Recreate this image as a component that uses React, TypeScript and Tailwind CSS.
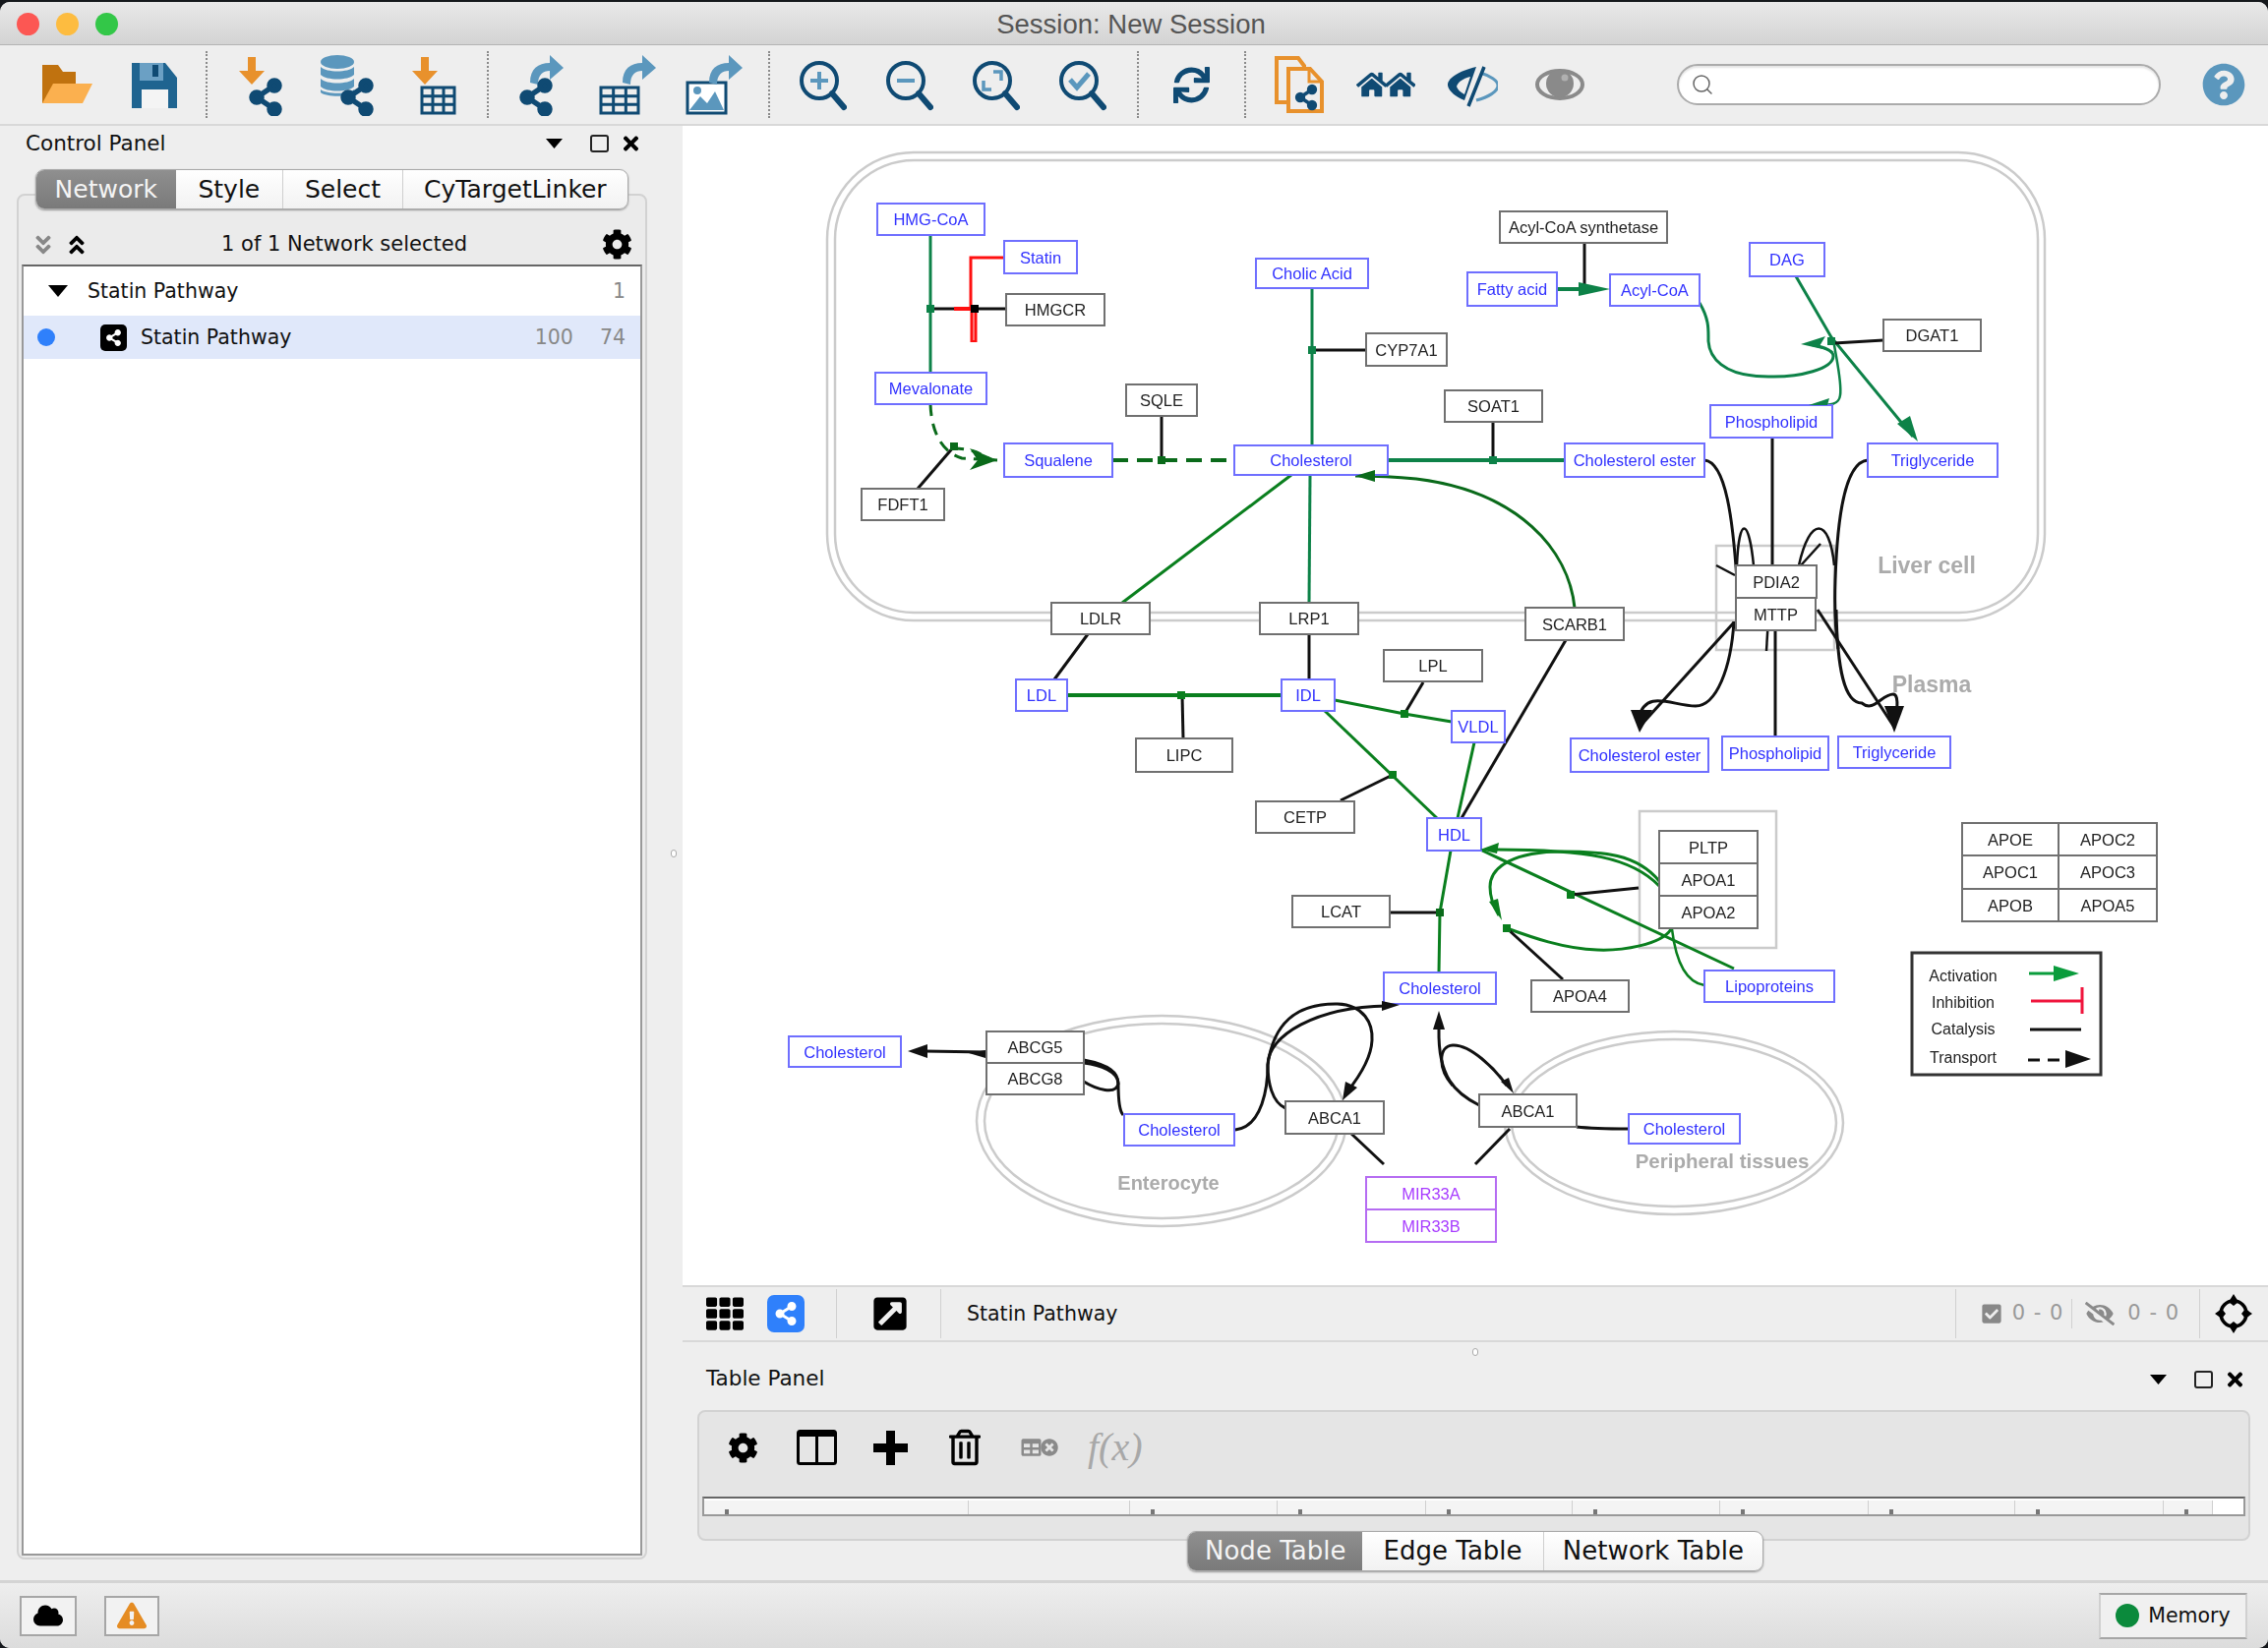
import {
  FaCheckSquare,
  FaCloud,
  FaCog,
  FaAngleDoubleDown,
  FaAngleDoubleUp,
  FaExclamationTriangle,
  FaExternalLinkSquareAlt,
  FaEyeSlash,
  FaHome,
  FaQuestionCircle,
  FaRegTrashAlt,
  FaShareAlt,
  FaSync,
  FaTable,
  FaTh,
  FaTimes,
  FaTimesCircle,
} from "react-icons/fa";
import { Search } from "lucide-react";

const NAVY = "#0f4a73";
const SKY = "#5b97bd";
const ORANGE = "#e8912c";
const TEAL = "#0d8248";
const GREEN = "#0a7f1e";
const DARK = "#0a6a1a";
const INK = "#111111";

const Share = ({ cx, cy, s = 11, fill = NAVY }: { cx: number; cy: number; s?: number; fill?: string }) => (
  <g fill={fill} stroke={fill} strokeWidth={s * 0.45}>
    <line x1={cx + s * 0.75} y1={cy - s} x2={cx - s * 0.75} y2={cy} />
    <line x1={cx + s * 0.75} y1={cy + s} x2={cx - s * 0.75} y2={cy} />
    <circle cx={cx + s * 0.75} cy={cy - s} r={s * 0.42} />
    <circle cx={cx - s * 0.75} cy={cy} r={s * 0.42} />
    <circle cx={cx + s * 0.75} cy={cy + s} r={s * 0.42} />
  </g>
);

const Grid = ({ x, y, w, h }: { x: number; y: number; w: number; h: number }) => (
  <g stroke={NAVY} strokeWidth="3" fill="none">
    <rect x={x} y={y} width={w} height={h} />
    <line x1={x} y1={y + h / 3} x2={x + w} y2={y + h / 3} />
    <line x1={x} y1={y + (2 * h) / 3} x2={x + w} y2={y + (2 * h) / 3} />
    <line x1={x + w / 3} y1={y} x2={x + w / 3} y2={y + h} />
    <line x1={x + (2 * w) / 3} y1={y} x2={x + (2 * w) / 3} y2={y + h} />
  </g>
);

const DownArrow = ({ x }: { x: number }) => (
  <path d={`M${x - 4} 4h8v14h9L${x} 32 ${x - 13} 18h9z`} fill={ORANGE} />
);

const OutArrow = ({ x }: { x: number }) => (
  <path
    d={`M${x} 30C${x} 16 ${x + 8} 10 ${x + 20} 10V2L${x + 34} 15 ${x + 20} 27V18C${x + 13} 18 ${x + 8} 22 ${x + 8} 32z`}
    fill={SKY}
  />
);

const Sep = ({ ml }: { ml: string }) => <div className={`${ml} h-[68px] w-0 border-l-2 border-dotted border-[#8a8a8a]`} />;

const ZoomIcon = ({ children, ml }: { children: React.ReactNode; ml: string }) => (
  <svg className={`${ml} h-[64px] w-[48px]`} viewBox="0 0 48 64">
    <circle cx="20" cy="28" r="18" fill="none" stroke={NAVY} strokeWidth="4" />
    <line x1="33" y1="41" x2="45" y2="55" stroke={NAVY} strokeWidth="6" strokeLinecap="round" />
    {children}
  </svg>
);

const Toolbar = () => (
  <div className="flex h-[82px] items-center border-b-2 border-[#d8d8d8] bg-[#eeeeee] pl-[42px]">
    <svg className="h-[64px] w-[52px]" viewBox="0 0 52 64">
      <path d="M1 12h16l5 7h13v12H14L6 51H1z" fill="#c0720f" />
      <path d="M12 31h40L42 51H1z" fill="#fbb04f" />
    </svg>
    <svg className="ml-[40px] h-[64px] w-[46px]" viewBox="0 0 46 64">
      <path d="M0 10h34l12 15v31H0z" fill="#1f6490" />
      <rect x="8" y="10" width="24" height="18" fill="#6ba0c4" />
      <rect x="21" y="12" width="6" height="12" fill={NAVY} />
      <rect x="10" y="37" width="27" height="19" fill="#f4f4f4" />
    </svg>
    <Sep ml="ml-[29px]" />
    <svg className="ml-[32px] h-[64px] w-[45px]" viewBox="0 0 45 64">
      <DownArrow x={13} />
      <Share cx={27} cy={45} s={12} />
    </svg>
    <svg className="ml-[37px] h-[64px] w-[56px]" viewBox="0 0 56 64">
      <g fill={SKY}>
        <ellipse cx="18" cy="9" rx="17" ry="7" />
        <path d="M1 14c6 6 28 6 34 0v8c-6 6-28 6-34 0z" />
        <path d="M1 26c6 6 28 6 34 0v8c-6 6-28 6-34 0z" />
        <path d="M1 37c6 5 28 5 34 0v3c-6 5-28 5-34 0z" />
      </g>
      <Share cx={38} cy={45} s={12} />
    </svg>
    <svg className="ml-[38px] h-[64px] w-[46px]" viewBox="0 0 46 64">
      <DownArrow x={13} />
      <Grid x={10} y={35} w={33} h={26} />
    </svg>
    <Sep ml="ml-[30px]" />
    <svg className="ml-[30px] h-[64px] w-[48px]" viewBox="0 0 48 64">
      <OutArrow x={12} />
      <Share cx={18} cy={45} s={12} />
    </svg>
    <svg className="ml-[34px] h-[64px] w-[60px]" viewBox="0 0 60 64">
      <Grid x={2} y={35} w={38} h={26} />
      <OutArrow x={24} />
    </svg>
    <svg className="ml-[28px] h-[64px] w-[62px]" viewBox="0 0 62 64">
      <rect x="2" y="30" width="39" height="31" fill="#fff" stroke={NAVY} strokeWidth="3" />
      <path d="M4 58l11-14 7 7 8-12 9 19z" fill={SKY} />
      <circle cx="12" cy="38" r="4" fill={SKY} />
      <OutArrow x={24} />
    </svg>
    <Sep ml="ml-[22px]" />
    <ZoomIcon ml="ml-[30px]">
      <path d="M20 19v18M11 28h18" stroke={SKY} strokeWidth="4" />
    </ZoomIcon>
    <ZoomIcon ml="ml-[40px]">
      <path d="M11 28h18" stroke={SKY} strokeWidth="4" />
    </ZoomIcon>
    <ZoomIcon ml="ml-[40px]">
      <path d="M21 19h8v9M19 37h-8v-9" stroke={SKY} strokeWidth="3.5" fill="none" />
    </ZoomIcon>
    <ZoomIcon ml="ml-[40px]">
      <path d="M11 27l7 8 12-14" stroke={SKY} strokeWidth="5" fill="none" />
    </ZoomIcon>
    <Sep ml="ml-[31px]" />
    <FaSync className="ml-[35px] h-[37px] w-[37px] text-[#0f4a73]" />
    <Sep ml="ml-[35px]" />
    <svg className="ml-[29px] h-[64px] w-[50px]" viewBox="0 0 50 64">
      <path d="M2 5h22l6 8v37H2z" fill="none" stroke={ORANGE} strokeWidth="4" />
      <path d="M14 16h22l12 13v30H14z" fill="#eeeeee" stroke={ORANGE} strokeWidth="4" />
      <path d="M35 16v13h13" fill="none" stroke={ORANGE} strokeWidth="3" />
      <Share cx={32} cy={45} s={8} />
    </svg>
    <div className="ml-[33px] flex w-[60px] justify-between">
      <FaHome className="-mr-[3px] h-[32px] w-[33px] text-[#0f4a73]" />
      <FaHome className="h-[32px] w-[33px] text-[#0f4a73]" />
    </div>
    <svg className="ml-[32px] h-[64px] w-[52px]" viewBox="0 0 52 64">
      <path d="M30 14C12 18 0 26 1 33c1 6 9 12 17 15z" fill={NAVY} />
      <path d="M24 24c-8 2-13 6-14 10 1 3 4 6 8 8z" fill="#eeeeee" />
      <path d="M34 20c10 3 18 8 18 13 0 6-10 12-22 15" fill="none" stroke={SKY} strokeWidth="3" />
      <path d="M37 12L21 52" stroke="#eeeeee" strokeWidth="5" />
      <path d="M38 14L22 54" stroke={NAVY} strokeWidth="3.5" />
    </svg>
    <svg className="ml-[37px] h-[64px] w-[52px]" viewBox="0 0 52 64">
      <ellipse cx="26" cy="32" rx="23" ry="14" fill="none" stroke="#8a8a8a" strokeWidth="4" />
      <circle cx="26" cy="31" r="14" fill="#8a8a8a" />
      <circle cx="31" cy="25" r="3.5" fill="#b0b0b0" />
    </svg>
    <div className="ml-[93px] flex h-[42px] w-[492px] items-center rounded-[21px] border-2 border-[#ababab] bg-white pl-[12px] shadow-[inset_0_2px_2px_#e4e4e4]">
      <Search className="h-[24px] w-[24px] text-[#666666]" strokeWidth={1.5} />
    </div>
    <FaQuestionCircle className="ml-[42px] h-[44px] w-[44px] text-[#5b97bd]" />
  </div>
);

const Tabs = ({ items, className }: { items: { label: string; w: string }[]; className: string }) => (
  <div className={`relative z-10 flex h-[41px] overflow-hidden rounded-[9px] border border-[#a9a9a9] bg-gradient-to-b from-white to-[#f2f2f2] text-[#111] shadow-[0_1px_2px_#999] ${className}`}>
    {items.map((t, i) => (
      <div
        key={t.label}
        className={`${t.w} flex items-center justify-center ${
          i === 0
            ? "bg-gradient-to-b from-[#8f8f8f] to-[#7a7a7a] text-[#f4f4f4]"
            : i === 1
              ? ""
              : "border-l border-[#cfcfcf]"
        }`}
      >
        {t.label}
      </div>
    ))}
  </div>
);

const PanelButtons = () => (
  <div className="flex items-center">
    <svg className="h-[10px] w-[17px]" viewBox="0 0 17 10">
      <path d="M0 0h17L8.5 10z" fill="#000" />
    </svg>
    <div className="ml-[28px] h-[18px] w-[19px] rounded-[3px] border-2 border-[#222]" />
    <FaTimes className="ml-[13px] h-[22px] w-[19px] text-black" />
  </div>
);

const LeftPanel = () => (
  <div className="flex w-[676px] flex-col">
    <div className="flex h-[36px] items-center justify-between pl-[26px] pr-[25px] text-[21.5px] text-[#111]">
      <span>Control Panel</span>
      <PanelButtons />
    </div>
    <Tabs
      className="ml-[36px] mt-[8px] w-[603px] text-[25px]"
      items={[
        { label: "Network", w: "w-[142px]" },
        { label: "Style", w: "w-[109px]" },
        { label: "Select", w: "w-[122px]" },
        { label: "CyTargetLinker", w: "w-[230px]" },
      ]}
    />
    <div className="-mt-[16px] ml-[17px] flex h-[1389px] w-[641px] flex-col rounded-[8px] border-2 border-[#d2d2d2] bg-[#ebebeb] px-[3px] pb-[2px]">
      <div className="flex h-[70px] items-end pb-[5px] pl-[12px] pr-[10px] text-[21px] text-[#111]">
        <div className="flex h-[30px] w-[66px] items-center gap-[14px]">
          <FaAngleDoubleDown className="h-[24px] w-[20px] text-[#888]" />
          <FaAngleDoubleUp className="h-[24px] w-[20px] text-black" />
        </div>
        <div className="flex h-[30px] flex-1 items-center justify-center pr-[12px]">1 of 1 Network selected</div>
        <FaCog className="h-[31px] w-[31px] text-black" />
      </div>
      <div className="flex-1 border-2 border-[#999] border-t-[#666] bg-white text-[20.5px] text-[#111]">
        <div className="flex h-[50px] items-center pl-[25px] pr-[15px]">
          <svg className="h-[12px] w-[20px]" viewBox="0 0 20 12">
            <path d="M0 0h20L10 12z" fill="#000" />
          </svg>
          <span className="ml-[20px] flex-1">Statin Pathway</span>
          <span className="text-[#888]">1</span>
        </div>
        <div className="flex h-[44px] items-center bg-[#e0e8fa] pl-[14px] pr-[15px]">
          <div className="h-[18px] w-[18px] rounded-full bg-[#2f80fb]" />
          <div className="ml-[46px] flex h-[27px] w-[27px] items-center justify-center rounded-[5px] bg-black">
            <FaShareAlt className="h-[17px] w-[17px] text-white" />
          </div>
          <span className="ml-[14px] flex-1">Statin Pathway</span>
          <span className="text-[#888]">100</span>
          <span className="ml-[27px] text-[#888]">74</span>
        </div>
      </div>
    </div>
  </div>
);

type Kind = "b" | "k" | "p";
const nodes: [string, number, number, number, number, Kind][] = [
  ["HMG-CoA", 892, 207, 1001, 239, "b"],
  ["Statin", 1021, 245, 1095, 278, "b"],
  ["HMGCR", 1023, 299, 1123, 331, "k"],
  ["Mevalonate", 890, 379, 1003, 411, "b"],
  ["SQLE", 1145, 391, 1217, 423, "k"],
  ["Squalene", 1021, 451, 1131, 485, "b"],
  ["Cholesterol", 1255, 453, 1411, 483, "b"],
  ["FDFT1", 876, 497, 960, 529, "k"],
  ["Cholic Acid", 1277, 263, 1391, 293, "b"],
  ["CYP7A1", 1389, 339, 1471, 372, "k"],
  ["LDLR", 1069, 613, 1169, 645, "k"],
  ["LRP1", 1281, 613, 1381, 645, "k"],
  ["SOAT1", 1469, 397, 1568, 429, "k"],
  ["Acyl-CoA synthetase", 1525, 215, 1695, 247, "k"],
  ["Fatty acid", 1492, 277, 1583, 311, "b"],
  ["Acyl-CoA", 1637, 279, 1728, 311, "b"],
  ["DAG", 1779, 247, 1855, 281, "b"],
  ["DGAT1", 1915, 325, 2014, 357, "k"],
  ["Phospholipid", 1739, 412, 1863, 445, "b"],
  ["Cholesterol ester", 1591, 451, 1733, 485, "b"],
  ["Triglyceride", 1899, 451, 2031, 485, "b"],
  ["PDIA2", 1765, 575, 1847, 608, "k"],
  ["MTTP", 1765, 608, 1846, 641, "k"],
  ["SCARB1", 1551, 618, 1651, 651, "k"],
  ["LDL", 1033, 691, 1085, 723, "b"],
  ["IDL", 1303, 691, 1357, 723, "b"],
  ["LPL", 1407, 661, 1507, 693, "k"],
  ["LIPC", 1155, 751, 1253, 785, "k"],
  ["CETP", 1277, 815, 1377, 847, "k"],
  ["HDL", 1451, 832, 1506, 865, "b"],
  ["LCAT", 1314, 911, 1413, 943, "k"],
  ["Cholesterol", 1407, 989, 1521, 1021, "b"],
  ["Cholesterol", 802, 1054, 916, 1085, "b"],
  ["ABCG5", 1003, 1049, 1102, 1081, "k"],
  ["ABCG8", 1003, 1081, 1102, 1113, "k"],
  ["Cholesterol", 1143, 1133, 1255, 1165, "b"],
  ["ABCA1", 1307, 1120, 1407, 1153, "k"],
  ["MIR33A", 1389, 1197, 1521, 1230, "p"],
  ["MIR33B", 1389, 1230, 1521, 1263, "p"],
  ["VLDL", 1476, 723, 1530, 755, "b"],
  ["Cholesterol ester", 1597, 751, 1737, 785, "b"],
  ["Phospholipid", 1751, 749, 1859, 783, "b"],
  ["Triglyceride", 1869, 749, 1983, 781, "b"],
  ["PLTP", 1687, 845, 1787, 878, "k"],
  ["APOA1", 1687, 878, 1787, 911, "k"],
  ["APOA2", 1687, 911, 1787, 944, "k"],
  ["APOA4", 1557, 997, 1656, 1029, "k"],
  ["Lipoproteins", 1733, 987, 1865, 1019, "b"],
  ["ABCA1", 1504, 1113, 1603, 1146, "k"],
  ["Cholesterol", 1656, 1133, 1769, 1163, "b"],
  ["APOE", 1995, 837, 2093, 870, "k"],
  ["APOC2", 2093, 837, 2193, 870, "k"],
  ["APOC1", 1995, 870, 2093, 904, "k"],
  ["APOC3", 2093, 870, 2193, 904, "k"],
  ["APOB", 1995, 904, 2093, 937, "k"],
  ["APOA5", 2093, 904, 2193, 937, "k"],
];

const kinds: Record<Kind, { stroke: string; text: string }> = {
  b: { stroke: "#6f6fff", text: "#3232ff" },
  k: { stroke: "#707070", text: "#222222" },
  p: { stroke: "#b56cf2", text: "#a83cff" },
};

// [path, colour, width, dash]
const edges: [string, string, number, string?][] = [
  ["M946 239V379", TEAL, 3],
  ["M946 314H1023", INK, 3],
  ["M970 314H990", "#ff1010", 4],
  ["M1021 262H987V314", "#ff1010", 3],
  ["M990 312V348", "#ff1010", 7],
  ["M990 314V346", "#ff9090", 1.5],
  ["M946 411C947 440 958 460 978 466L1014 468", DARK, 3, "12 8"],
  ["M970 456C985 456 995 460 1005 466", DARK, 3, "10 8"],
  ["M933 497L970 454", INK, 3],
  ["M1131 468H1255", DARK, 4, "16 9"],
  ["M1181 423V468", INK, 3],
  ["M1334 293V453", TEAL, 3],
  ["M1334 356H1389", INK, 3],
  ["M1411 468H1591", TEAL, 4],
  ["M1518 429V468", INK, 3],
  ["M1313 483L1141 613", GREEN, 3],
  ["M1332 483L1331 613", TEAL, 3],
  ["M1601 618C1595 560 1545 500 1440 487C1410 484 1390 484 1378 484", DARK, 3],
  ["M1611 247V294", INK, 3],
  ["M1583 294H1625", TEAL, 4],
  ["M1728 308C1738 325 1737 335 1737 347C1738 362 1750 383 1798 383C1830 384 1864 375 1864 362C1864 355 1850 352 1840 350", TEAL, 3],
  ["M1826 281L1862 343L1945 444", TEAL, 3],
  ["M1915 346L1865 349", INK, 3],
  ["M1864 345C1868 370 1873 390 1871 402C1870 412 1860 412 1848 412", TEAL, 2.5],
  ["M1802 445V575", INK, 3],
  ["M1733 468C1755 470 1762 530 1766 590", INK, 3],
  ["M1899 468C1875 470 1868 530 1866 590C1865 620 1866 640 1869 660", INK, 3],
  ["M1766 575C1768 525 1778 525 1783 575", INK, 2.5],
  ["M1829 575C1840 525 1860 525 1865 575", INK, 2.5],
  ["M1831 575L1851 553", INK, 2.5],
  ["M1745 575L1764 585", INK, 2.5],
  ["M1763 633L1668 738", INK, 3],
  ["M1763 632C1760 680 1745 718 1724 718C1700 718 1674 700 1666 730", INK, 3],
  ["M1805 641V749", INK, 3],
  ["M1798 628L1796 662", INK, 2.5],
  ["M1848 620L1925 738", INK, 3],
  ["M1867 620C1868 680 1875 715 1893 715C1905 725 1913 706 1925 706C1932 706 1928 730 1926 740", INK, 3],
  ["M1592 651L1486 832", INK, 3],
  ["M1499 755L1482 832", GREEN, 3],
  ["M1357 712L1428 726L1476 734", GREEN, 3],
  ["M1428 726L1447 694", INK, 3],
  ["M1347 723L1461 832", GREEN, 3],
  ["M1363 814L1416 788", INK, 3],
  ["M1085 707H1303", GREEN, 4],
  ["M1202 707L1203 751", INK, 3],
  ["M1106 645L1072 691", INK, 3],
  ["M1331 645V691", INK, 3],
  ["M1475 865L1464 928L1463 989", GREEN, 3],
  ["M1413 928H1464", INK, 3],
  ["M1763 985L1505 864", GREEN, 3],
  ["M1597 910L1666 903", INK, 3],
  ["M1687 901C1659 872 1614 864 1520 864", GREEN, 3],
  ["M1687 896C1664 868 1629 866 1589 866C1540 866 1515 881 1515 902C1515 915 1519 923 1524 931", GREEN, 3],
  ["M1699 945C1689 961 1649 967 1624 966C1589 965 1554 952 1532 944", GREEN, 3],
  ["M1589 996L1532 944", INK, 3],
  ["M1733 1002C1714 999 1704 978 1700 945", GREEN, 2.5],
  ["M1256 1149C1284 1146 1289 1104 1289 1083C1289 1053 1338 1024 1410 1023", INK, 3],
  ["M1307 1127C1293 1121 1289 1100 1289 1083C1293 1053 1307 1020 1360 1021C1387 1022 1396 1041 1395 1058C1394 1079 1378 1100 1370 1110", INK, 3],
  ["M1374 1153L1407 1184", INK, 3],
  ["M1002 1070L940 1069", INK, 3],
  ["M1102 1078C1128 1083 1137 1091 1137 1102C1137 1121 1139 1131 1142 1134", INK, 3],
  ["M1102 1100C1115 1108 1135 1114 1137 1102C1137 1090 1119 1083 1102 1081", INK, 3],
  ["M1504 1124C1480 1112 1462 1096 1463 1047", INK, 3],
  ["M1532 1104C1520 1087 1495 1062 1477 1063C1462 1064 1462 1087 1477 1104", INK, 3],
  ["M1603 1146C1620 1148 1640 1148 1656 1148", INK, 3],
  ["M1535 1148L1500 1184", INK, 3],
];

const arrows: [string, string][] = [
  ["1605,287 1637,294 1605,301", TEAL],
  ["1014,468 986,456 994,468 986,478", DARK],
  ["1378,484 1398,478 1398,490", DARK],
  ["1831,350 1856,342 1850,352 1866,358", TEAL],
  ["1839,412 1860,405 1858,412", TEAL],
  ["1950,449 1929,431 1942,423", TEAL],
  ["1667,745 1658,722 1680,722", INK],
  ["1926,745 1916,718 1936,718", INK],
  ["1505,864 1524,857 1522,868", GREEN],
  ["1527,936 1514,917 1523,914", GREEN],
  ["923,1069 943,1062 943,1076", INK],
  ["1002,1076 985,1071 1002,1068", INK],
  ["1423,1022 1405,1018 1405,1028", INK],
  ["1365,1119 1368,1100 1380,1106", INK],
  ["1463,1028 1457,1047 1469,1047", INK],
  ["1539,1112 1526,1100 1534,1096", INK],
];

const junctions: [number, number, string][] = [
  [946, 314, TEAL],
  [991, 314, "#000000"],
  [970, 454, DARK],
  [1181, 468, DARK],
  [1334, 356, TEAL],
  [1518, 468, TEAL],
  [1611, 294, TEAL],
  [1862, 347, TEAL],
  [1201, 707, GREEN],
  [1428, 726, GREEN],
  [1416, 788, GREEN],
  [1464, 928, DARK],
  [1597, 910, GREEN],
  [1532, 944, GREEN],
];

const labels: [string, number, number, number][] = [
  ["Liver cell", 1959, 575, 23],
  ["Plasma", 1964, 696, 23],
  ["Enterocyte", 1188, 1203, 20],
  ["Peripheral tissues", 1751, 1180, 20.5],
];

const legend: [string, number, number][] = [
  ["Activation", 1996, 992],
  ["Inhibition", 1996, 1019],
  ["Catalysis", 1996, 1046],
  ["Transport", 1996, 1075],
];

const Network = () => (
  <svg className="h-full w-full blur-[0.7px] font-['Liberation_Sans',Arial,sans-serif]" viewBox="694 128 1612 1179">
    <g fill="none" stroke="#cbcbcb" strokeWidth="2.5">
      <rect x="841" y="155" width="1238" height="476" rx="88" />
      <rect x="849" y="163" width="1223" height="460" rx="80" />
      <ellipse cx="1181" cy="1140" rx="188" ry="107" />
      <ellipse cx="1181" cy="1140" rx="180" ry="99" />
      <ellipse cx="1702" cy="1142" rx="172" ry="93" />
      <ellipse cx="1702" cy="1142" rx="165" ry="85" />
      <rect x="1745" y="555" width="120" height="106" />
      <rect x="1667" y="825" width="139" height="139" />
    </g>
    {labels.map(([t, x, y, s]) => (
      <text key={t} x={x} y={y} fontSize={s} fontWeight="700" fill="#ababab" textAnchor="middle" dominantBaseline="central">
        {t}
      </text>
    ))}
    {edges.map(([d, c, w, dash], i) => (
      <path key={i} d={d} fill="none" stroke={c} strokeWidth={w} strokeDasharray={dash} />
    ))}
    {nodes.map(([t, x1, y1, x2, y2, k], i) => (
      <g key={i}>
        <rect x={x1} y={y1} width={x2 - x1} height={y2 - y1} fill="#ffffff" stroke={kinds[k].stroke} strokeWidth="2" />
        <text x={(x1 + x2) / 2} y={(y1 + y2) / 2} fontSize="16.5" fill={kinds[k].text} textAnchor="middle" dominantBaseline="central">
          {t}
        </text>
      </g>
    ))}
    {arrows.map(([p, c]) => (
      <polygon key={p} points={p} fill={c} />
    ))}
    {junctions.map(([x, y, c]) => (
      <rect key={`${x}-${y}`} x={x - 4} y={y - 4} width="8" height="8" fill={c} />
    ))}
    <rect x="1944" y="969" width="192" height="124" fill="#fff" stroke="#333" strokeWidth="3" />
    {legend.map(([t, x, y]) => (
      <text key={t} x={x} y={y} fontSize="16" fill="#222" textAnchor="middle" dominantBaseline="central">
        {t}
      </text>
    ))}
    <path d="M2063 990H2095" stroke="#0a9c3c" strokeWidth="3" />
    <polygon points="2088,982 2114,990 2088,998" fill="#0a9c3c" />
    <path d="M2065 1018H2117M2117 1004V1031" stroke="#f0143c" strokeWidth="3" fill="none" />
    <path d="M2064 1047H2116" stroke="#111" strokeWidth="3" />
    <path d="M2062 1078H2100" stroke="#111" strokeWidth="3" strokeDasharray="12 8" />
    <polygon points="2100,1068 2126,1077 2100,1086" fill="#111" />
  </svg>
);

const StatusBarOfCanvas = () => (
  <div className="flex h-[58px] items-center border-y-2 border-[#d8d8d8] bg-[#eeeeee] text-[20.5px] text-[#111]">
    <FaTh className="ml-[20px] h-[38px] w-[46px] text-black" />
    <div className="ml-[20px] flex h-[38px] w-[38px] items-center justify-center rounded-[7px] bg-[#2f80fb]">
      <FaShareAlt className="h-[24px] w-[24px] text-white" />
    </div>
    <div className="ml-[32px] h-[50px] border-l border-[#d0d0d0]" />
    <FaExternalLinkSquareAlt className="ml-[35px] h-[38px] w-[38px] text-black" />
    <div className="ml-[32px] h-[50px] border-l border-[#d0d0d0]" />
    <span className="ml-[26px]">Statin Pathway</span>
    <div className="ml-auto h-[50px] border-l border-[#d0d0d0]" />
    <FaCheckSquare className="ml-[25px] h-[22px] w-[22px] text-[#888]" />
    <span className="ml-[10px] text-[21px] tracking-[1px] text-[#999]">0 - 0</span>
    <div className="ml-[8px] h-[30px] border-l border-[#d0d0d0]" />
    <FaEyeSlash className="ml-[12px] h-[24px] w-[32px] text-[#8a8a8a]" />
    <span className="ml-[12px] text-[21px] tracking-[1px] text-[#999]">0 - 0</span>
    <div className="ml-[20px] h-[50px] border-l border-[#d0d0d0]" />
    <svg className="ml-[15px] mr-[16px] h-[40px] w-[38px]" viewBox="0 0 38 40">
      <circle cx="19" cy="20" r="13" fill="none" stroke="#000" strokeWidth="3.5" />
      <path d="M19 0l5 8-5 4-5-4zM19 40l5-8-5-4-5 4zM0 20l7-5 4 5-4 5zM38 20l-7-5-4 5 4 5z" fill="#000" />
    </svg>
  </div>
);

const columns = [
  "w-[269px]",
  "w-[164px]",
  "w-[150px]",
  "w-[151px]",
  "w-[149px]",
  "w-[150px]",
  "w-[151px]",
  "w-[149px]",
  "w-[151px]",
  "w-[50px]",
];

const TablePanel = () => (
  <div className="flex flex-1 flex-col">
    <div className="flex h-[35px] items-center justify-between pl-[24px] pr-[24px] text-[21.5px] text-[#111]">
      <span>Table Panel</span>
      <PanelButtons />
    </div>
    <div className="ml-[15px] mt-[14px] flex h-[133px] w-[1579px] flex-col rounded-[8px] border-2 border-[#d2d2d2] bg-[#e5e5e5] px-[3px]">
      <div className="flex h-[86px] items-center pb-[14px] pl-[26px]">
        <FaCog className="h-[31px] w-[31px] text-black" />
        <svg className="ml-[39px] h-[36px] w-[41px]" viewBox="0 0 41 36">
          <rect x="1.5" y="1.5" width="38" height="33" rx="2" fill="none" stroke="#000" strokeWidth="3" />
          <rect x="1" y="1" width="39" height="6" fill="#000" />
          <rect x="19" y="2" width="3" height="32" fill="#000" />
        </svg>
        <svg className="ml-[37px] h-[35px] w-[35px]" viewBox="0 0 35 35">
          <path d="M13 0h9v13h13v9H22v13h-9V22H0v-9h13z" fill="#000" />
        </svg>
        <FaRegTrashAlt className="ml-[42px] h-[38px] w-[32px] text-black" />
        <div className="ml-[41px] flex items-center">
          <FaTable className="h-[20px] w-[21px] text-[#8a8a8a]" />
          <FaTimesCircle className="-ml-[1px] h-[18px] w-[18px] text-[#8a8a8a]" />
        </div>
        <span className="ml-[30px] font-['Liberation_Serif',serif] text-[40px] italic leading-none text-[#a8a8a8]">f(x)</span>
      </div>
      <div className="h-[20px] border-2 border-[#999] border-t-[#666] bg-white">
        <div className="mt-[2px] flex h-[14px] w-[1534px] bg-[#f4f4f4]">
          {columns.map((c, i) => (
            <div key={c + i} className={`${c} flex items-end border-r border-[#cfcfcf] pl-[21px]`}>
              {i !== 1 && <div className="h-[5px] w-[4px] bg-[#777]" />}
            </div>
          ))}
        </div>
      </div>
    </div>
    <Tabs
      className="mx-auto -mt-[10px] w-[586px] text-[26px]"
      items={[
        { label: "Node Table", w: "w-[178px]" },
        { label: "Edge Table", w: "w-[184px]" },
        { label: "Network Table", w: "w-[224px]" },
      ]}
    />
  </div>
);

export default function App() {
  return (
    <div className="h-[1676px] w-[2306px] bg-[#15181c] pt-[2px] font-['DejaVu_Sans',sans-serif]">
      <div className="flex h-[1674px] flex-col overflow-hidden rounded-[10px] bg-[#eeeeee]">
        <div className="relative flex h-[44px] items-center justify-center border-b border-[#b4b4b4] bg-gradient-to-b from-[#e9e9e9] to-[#d3d3d3] pr-[6px] pt-[2px] font-['Liberation_Sans',sans-serif] text-[27.5px] text-[#555555]">
          <div className="absolute left-[17px] flex gap-[17px]">
            <div className="h-[23px] w-[23px] rounded-full bg-[#fc5753]" />
            <div className="h-[23px] w-[23px] rounded-full bg-[#fdbc40]" />
            <div className="h-[23px] w-[23px] rounded-full bg-[#33c748]" />
          </div>
          Session: New Session
        </div>
        <Toolbar />
        <div className="flex h-[1479px]">
          <LeftPanel />
          <div className="flex w-[18px] items-center justify-center">
            <div className="h-[8px] w-[6px] rounded-full border border-[#aaa] bg-white" />
          </div>
          <div className="flex w-[1612px] flex-col">
            <div className="h-[1179px] bg-white">
              <Network />
            </div>
            <StatusBarOfCanvas />
            <div className="flex h-[20px] items-center justify-center">
              <div className="h-[8px] w-[6px] rounded-full border border-[#aaa] bg-white" />
            </div>
            <TablePanel />
          </div>
        </div>
        <div className="flex flex-1 items-center border-t-[3px] border-[#d4d4d4] bg-gradient-to-b from-[#eeeeee] to-[#dcdcdc] px-[20px]">
          <div className="flex h-[41px] w-[58px] items-center justify-center border-2 border-[#a6a6a6] bg-[#f2f2f2]">
            <FaCloud className="h-[28px] w-[30px] text-black" />
          </div>
          <div className="ml-[28px] flex h-[41px] w-[56px] items-center justify-center border-2 border-[#a6a6a6] bg-[#f2f2f2]">
            <FaExclamationTriangle className="h-[28px] w-[30px] text-[#e58c23]" />
          </div>
          <div className="ml-auto mr-[1px] flex h-[47px] w-[151px] items-center justify-center gap-[9px] border-2 border-[#a6a6a6] border-x-[#d0d0d0] bg-[#f0f0f0] text-[20.5px] text-[#111]">
            <div className="h-[24px] w-[24px] rounded-full bg-[#0b8a3c]" />
            Memory
          </div>
        </div>
      </div>
    </div>
  );
}
